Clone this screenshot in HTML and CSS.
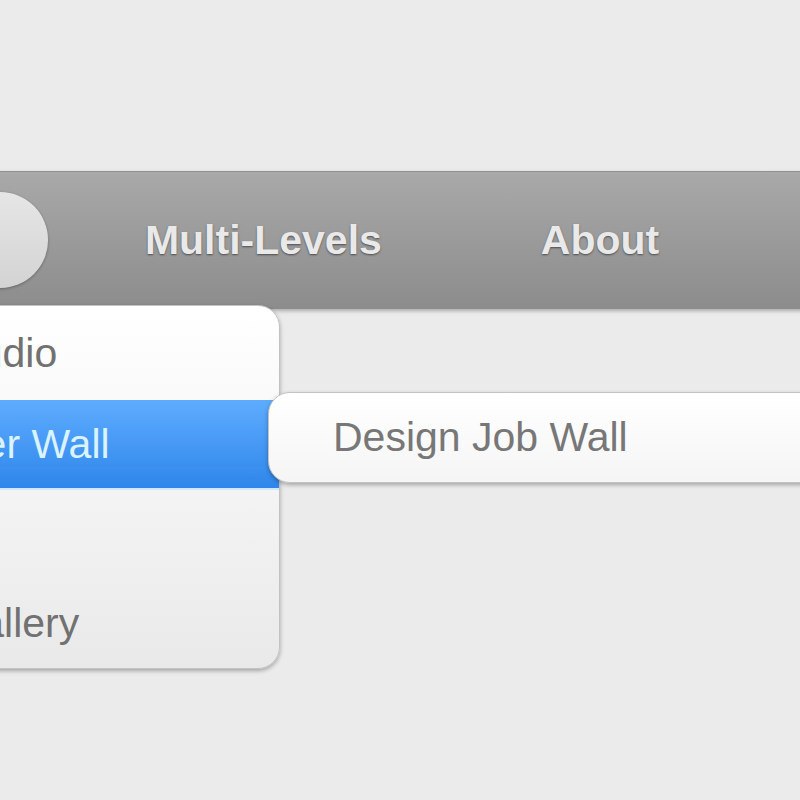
FILE: index.html
```html
<!DOCTYPE html>
<html lang="en">
<head>
<meta charset="utf-8">
<title>CSS3 Dropdown Menu</title>
<link rel="stylesheet" href="styles.css">
</head>
<body>
<div class="stage">
  <nav class="menubar">
    <ul class="menu">
      <li class="menu-item is-active">Home</li>
      <li class="menu-item">Multi-Levels</li>
      <li class="menu-item">About</li>
    </ul>
    <ul class="dropdown">
      <li class="drop-item">N.Design Studio</li>
      <li class="drop-item is-hover">Web Designer Wall
        <ul class="submenu">
          <li class="sub-item">Design Job Wall</li>
        </ul>
      </li>
      <li class="drop-item">IconDock</li>
      <li class="drop-item">Best Web Gallery</li>
    </ul>
  </nav>
</div>
</body>
</html>
```
FILE: styles.css
```css
html, body {
  margin: 0;
  padding: 0;
  background: #ebebeb;
  overflow: hidden;
}

.stage {
  height: 800px;
  padding-top: 171px;
  box-sizing: border-box;
  overflow: hidden;
  font-family: "Liberation Sans", Arial, sans-serif;
}

.menubar {
  position: relative;
  height: 138px;
  margin-left: -200px;
  width: calc(100% + 400px);
  background: linear-gradient(#a9a9a9, #8c8c8c);
  box-shadow: inset 0 1px 0 #939393, 0 2px 4px rgba(0, 0, 0, 0.28);
}

.menu {
  list-style: none;
  margin: 0;
  padding: 0 0 0 10px;
  height: 100%;
  display: flex;
  align-items: center;
  gap: 35px;
}

.menu-item {
  height: 96px;
  line-height: 96px;
  padding: 0 62px;
  font-size: 41px;
  font-weight: 700;
  color: #e9e9e9;
  text-shadow: 0 1px 2px rgba(0, 0, 0, 0.5);
  white-space: nowrap;
  border-radius: 48px;
}

.menu-item.is-active {
  color: #7a7a7a;
  text-shadow: none;
  background: linear-gradient(#e6e6e6, #d3d3d3);
  box-shadow: 0 1px 3px rgba(0, 0, 0, 0.3);
}

.dropdown {
  position: absolute;
  left: -80px;
  top: 134px;
  width: 560px;
  box-sizing: border-box;
  list-style: none;
  margin: 0;
  padding: 0;
  border: 1px solid #c2c2c2;
  border-radius: 0 22px 22px 0;
  background: linear-gradient(#ffffff, #e9e9e9);
  box-shadow: 0 2px 4px rgba(0, 0, 0, 0.3);
}

.drop-item {
  position: relative;
  height: 90px;
  line-height: 90px;
  padding-left: 40px;
  font-size: 41px;
  color: #717171;
  white-space: nowrap;
}

.drop-item:first-child {
  height: 94px;
  line-height: 94px;
}

.drop-item.is-hover {
  height: 88px;
  line-height: 88px;
  color: #d9f3ff;
  background: linear-gradient(#5eacff, #2f86ea);
  box-shadow: 0 2px 0 #cfe8ff;
}

.submenu {
  position: absolute;
  left: 547px;
  top: -8px;
  width: 700px;
  height: 91px;
  box-sizing: border-box;
  list-style: none;
  margin: 0;
  padding: 0;
  border: 1px solid #c3c3c3;
  border-radius: 22px 0 0 22px;
  background: linear-gradient(#ffffff, #f5f5f5);
  box-shadow: 0 2px 4px rgba(0, 0, 0, 0.3);
}

.sub-item {
  line-height: 89px;
  padding-left: 64px;
  font-size: 41px;
  color: #777777;
  white-space: nowrap;
}
```
